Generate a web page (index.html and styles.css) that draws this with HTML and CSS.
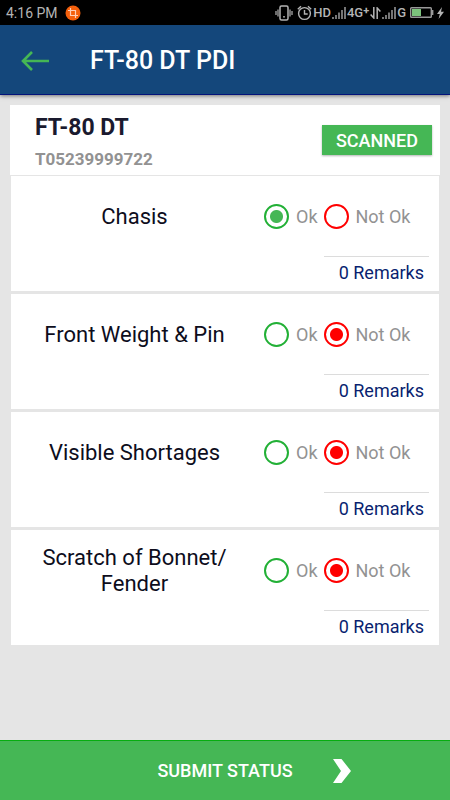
FILE: index.html
```html
<!DOCTYPE html>
<html lang="en">
	<head>
		<meta charset="utf-8">
		<meta name="viewport" content="width=device-width, initial-scale=1">
		<title>FT-80 DT PDI</title>
		<link rel="stylesheet" href="styles.css">
	</head>
	<body>
		<div class="statusbar">
			<span class="clock">4:16 PM</span>
			<svg width="16" height="16" viewBox="0 0 16 16">
				<circle cx="8" cy="8" r="7.5" fill="#f4600c"/>
				<path d="M5.5 3v7.500H13M3 5.500h7.500V13" fill="none" stroke="#ffd0b8" stroke-width="1.200"/>
			</svg>
			<div class="indicators">
				<!-- vibrate -->
				<svg width="18" height="16" viewBox="0 0 18 16">
					<rect x="5" y="1" width="8" height="14" rx="1.500" fill="none" stroke="#b4b4b4" stroke-width="1.500"/>
					<path d="M3 4.500v7M1 6v4M15 4.500v7M17 6v4" stroke="#b4b4b4" stroke-width="1.200"/>
					<rect x="8.200" y="11" width="1.600" height="1.600" fill="#b4b4b4"/>
				</svg>
				<!-- alarm -->
				<svg class="alarm" width="15" height="16" viewBox="0 0 15 16">
					<circle cx="7.500" cy="8.500" r="5.900" fill="none" stroke="#b4b4b4" stroke-width="1.400"/>
					<path d="M7.500 5v4h3.200M.8 4.200L4 1.300M14.200 4.200L11 1.300" fill="none" stroke="#b4b4b4" stroke-width="1.400"/>
				</svg>
				<span>HD</span>
				<svg width="14" height="12" viewBox="0 0 14 12">
					<path d="M1 12v-2M4 12V8M7 12V5.500M10 12V3M13 12V0" stroke="#b4b4b4" stroke-width="1.300"/>
				</svg>
				<span class="network">4G<b>+</b></span>
				<svg width="11" height="12" viewBox="0 0 11 12">
					<path d="M3.800 0v11L.6 7.600M7.200 12V1l3.200 3.400" fill="none" stroke="#b4b4b4" stroke-width="1.500"/>
				</svg>
				<svg width="14" height="12" viewBox="0 0 14 12">
					<path d="M1 12v-2M4 12V8M7 12V5.500M10 12V3M13 12V0" stroke="#b4b4b4" stroke-width="1.300"/>
				</svg>
				<span>G</span>
				<svg class="battery" width="24" height="11" viewBox="0 0 24 11">
					<rect x=".7" y=".7" width="20.600" height="9.600" rx=".8" fill="none" stroke="#999" stroke-width="1.400"/>
					<rect x="2" y="2" width="9" height="7" fill="#7cc47c"/>
					<path d="M22.700 3v5" stroke="#999" stroke-width="1.400"/>
				</svg>
				<svg width="7" height="12" viewBox="0 0 7 12">
					<path d="M5 0L0 7h2.800L1.600 12L7 4.800H4z" fill="#b4b4b4"/>
				</svg>
			</div>
		</div>

		<header class="header">
			<button class="back" type="button" aria-label="Back">
				<svg width="28" height="20" viewBox="0 0 28 20">
					<path d="M28 10H2M11 1L2 10l9 9" fill="none" stroke="#45b755" stroke-width="2.600"/>
				</svg>
			</button>
			<h1>FT-80 DT PDI</h1>
		</header>

		<main class="content">
			<section class="unit">
				<div>
					<h2>FT-80 DT</h2>
					<p class="serial">T05239999722</p>
				</div>
				<button class="scanned" type="button">SCANNED</button>
			</section>

			<form class="checklist" id="checklist">
				<fieldset class="item" aria-labelledby="name1">
					<div class="name" id="name1">Chasis</div>
					<div class="options">
						<label class="ok"><input type="radio" name="chasis" checked>Ok</label>
						<label class="notok"><input type="radio" name="chasis">Not Ok</label>
					</div>
					<a class="remarks" href="#">0 Remarks</a>
				</fieldset>
				<fieldset class="item" aria-labelledby="name2">
					<div class="name" id="name2">Front Weight &amp; Pin</div>
					<div class="options">
						<label class="ok"><input type="radio" name="weight">Ok</label>
						<label class="notok"><input type="radio" name="weight" checked>Not Ok</label>
					</div>
					<a class="remarks" href="#">0 Remarks</a>
				</fieldset>
				<fieldset class="item" aria-labelledby="name3">
					<div class="name" id="name3">Visible Shortages</div>
					<div class="options">
						<label class="ok"><input type="radio" name="shortages">Ok</label>
						<label class="notok"><input type="radio" name="shortages" checked>Not Ok</label>
					</div>
					<a class="remarks" href="#">0 Remarks</a>
				</fieldset>
				<fieldset class="item" aria-labelledby="name4">
					<div class="name" id="name4">Scratch of Bonnet/ Fender</div>
					<div class="options">
						<label class="ok"><input type="radio" name="scratch">Ok</label>
						<label class="notok"><input type="radio" name="scratch" checked>Not Ok</label>
					</div>
					<a class="remarks" href="#">0 Remarks</a>
				</fieldset>
			</form>
		</main>

		<button class="submit" type="submit" form="checklist">
			<span>SUBMIT STATUS</span>
			<svg width="18" height="24" viewBox="0 0 18 24">
				<path d="M0 0h8.500L18 12L8.500 24H0l8-12z" fill="#fff"/>
			</svg>
		</button>
	</body>
</html>
```
FILE: styles.css
```css
* {
	box-sizing: border-box;
}
body {
	margin: 0;
	min-height: 100vh;
	display: flex;
	flex-direction: column;
	background-color: #e5e5e5;
	font-family: Roboto, "Liberation Sans", sans-serif;
}
h1, h2, p {
	margin: 0;
}
svg {
	display: block;
	flex: none;
}
button {
	border: none;
	font-family: inherit;
	cursor: pointer;
}

/* phone status bar */
.statusbar {
	display: flex;
	align-items: center;
	gap: 7px;
	height: 25px;
	padding: 0 6px;
	background-color: #000;
	color: #b4b4b4;
	font-size: 14px;
}
.indicators {
	display: flex;
	align-items: center;
	gap: 1px;
	margin-left: auto;
	font-size: 13px;
	font-weight: 500;
}
.network {
	display: flex;
}
.network b {
	font-size: 11px;
	line-height: 11px;
}
.alarm {
	margin-left: 3px;
}
.battery {
	margin: 0 2px 0 3px;
}

/* title bar */
.header {
	display: flex;
	align-items: center;
	gap: 41px;
	height: 70px;
	padding: 2px 21px 0;
	background-color: #14477b;
	border-bottom: 1px solid #03137a;
	box-shadow: 0 1px 4px rgba(0, 0, 0, 0.5);
	color: #fff;
}
.header h1 {
	font-size: 25px;
	font-weight: 500;
}
.back {
	padding: 0;
	background: none;
}

.content {
	flex: 1;
	padding: 10px 10px 20px;
}
.unit {
	display: flex;
	align-items: center;
	justify-content: space-between;
	min-height: 70px;
	padding: 0 8px 0 25px;
	background-color: #fff;
}
.unit h2 {
	padding-top: 2px;
	font-size: 23px;
	line-height: 28px;
	font-weight: 700;
	color: #1a1a2e;
}
.serial {
	margin-top: 7px;
	font-size: 17px;
	line-height: 20px;
	font-weight: 700;
	color: #929292;
}
.scanned {
	height: 30px;
	padding: 0 14px;
	background-color: #45b755;
	box-shadow: 0 1px 2px rgba(0, 0, 0, 0.3);
	color: #fff;
	font-size: 18px;
	font-weight: 500;
}

/* checklist rows */
.checklist {
	display: flex;
	flex-direction: column;
	gap: 3px;
	margin: 1px 1px 0;
}
.item {
	display: grid;
	grid-template-columns: 1fr 175px;
	grid-template-rows: 80px 35px;
	margin: 0;
	padding: 0;
	border: none;
	background-color: #fff;
}
.name {
	align-self: center;
	padding: 1px 20px 0 14px;
	font-size: 22px;
	line-height: 26px;
	text-align: center;
	color: #0d0d1c;
}
.options {
	display: flex;
	align-items: center;
	gap: 6px;
}
.options label {
	display: flex;
	align-items: center;
	gap: 7px;
	font-size: 18px;
	color: #929292;
}
.options input {
	appearance: none;
	width: 25px;
	height: 25px;
	margin: 0;
	border: 2px solid;
	border-radius: 50%;
}
.ok input {
	border-color: #22b036;
}
.notok input {
	border-color: #f00;
}
.ok input:checked {
	background: radial-gradient(circle, #45b755 6px, #fff 7px);
}
.notok input:checked {
	background: radial-gradient(circle, #f00 6px, #fff 7px);
}
.remarks {
	grid-column: 2;
	justify-self: end;
	width: 105px;
	margin-right: 10px;
	padding-right: 5px;
	border-top: 1px solid #dcdcdc;
	color: #0a1f70;
	font-size: 18px;
	line-height: 32px;
	text-align: right;
	text-decoration: none;
}

.submit {
	display: flex;
	align-items: center;
	justify-content: center;
	gap: 40px;
	height: 60px;
	padding: 0 0 0 58px;
	background-color: #45b755;
	border-top: 1px solid #06ad10;
	color: #fff;
	font-size: 18px;
	font-weight: 500;
}
```
